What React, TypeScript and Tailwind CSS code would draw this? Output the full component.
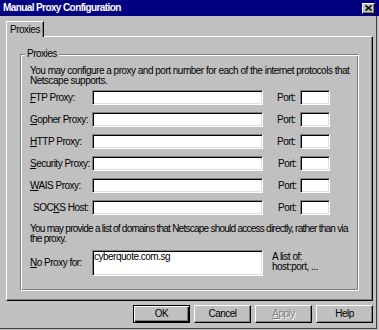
import React from "react";

const raised =
  "bg-[#c0c0c0] border border-t-white border-l-white border-r-black border-b-black shadow-[inset_-1px_-1px_0_#808080]";
const sunken =
  "bg-white border border-t-[#808080] border-l-[#808080] border-r-white border-b-white shadow-[inset_1px_1px_0_#000,inset_-1px_-1px_0_#dfdfdf]";

function Acc({ pre = "", k, rest }: { pre?: string; k: string; rest: string }) {
  return (
    <span>
      {pre}
      <span className="underline decoration-1 underline-offset-[1px]">{k}</span>
      {rest}
    </span>
  );
}

const rows = [
  { k: "F", rest: "TP Proxy:" },
  { k: "G", rest: "opher Proxy:" },
  { k: "H", rest: "TTP Proxy:" },
  { k: "S", rest: "ecurity Proxy:" },
  { k: "W", rest: "AIS Proxy:" },
  { pre: "SOC", k: "K", rest: "S Host:", indent: true },
];

export default function App() {
  return (
    <div className="w-[379px] h-[330px] bg-[#c0c0c0] overflow-hidden flex flex-col font-['Liberation_Sans',Arial,sans-serif] text-[10px] leading-[10px] tracking-[-0.5px] text-black">
      {/* Title bar */}
      <div className="h-[16px] bg-[#000080] flex items-center justify-between pl-[3px] pr-[4px] shrink-0">
        <span className="text-white font-bold tracking-[-0.6px] text-[10px]">Manual Proxy Configuration</span>
        <div className={`${raised} w-[13px] h-[11px] flex items-center justify-center`}>
          <svg width="7" height="6" viewBox="0 0 7 6">
            <path d="M0.5 0.5 L6.5 5.5 M6.5 0.5 L0.5 5.5" stroke="#000" strokeWidth="1.6" />
          </svg>
        </div>
      </div>

      {/* Body */}
      <div className="w-[377px] h-[313px] border-r border-b border-[#404040] pl-[6px] pt-[5px] flex flex-col">
        {/* Tab */}
        <div className="relative z-10 -mb-[1px] w-[38px] h-[16px] bg-[#c0c0c0] border-t border-l border-r border-t-white border-l-white border-r-black shadow-[inset_-1px_0_0_#808080] flex items-center justify-center">
          <span>Proxies</span>
        </div>

        {/* Tab panel */}
        <div className="w-[367px] h-[265px] border border-t-white border-l-white border-r-black border-b-black shadow-[inset_-1px_-1px_0_#808080] pt-[17px] pl-[13px]">
          {/* Group box */}
          <div className="relative w-[339px] h-[237px] border border-t-[#808080] border-l-[#808080] border-r-white border-b-white shadow-[inset_1px_1px_0_#fff,inset_-1px_-1px_0_#808080] pl-[9px] pt-[11px] flex flex-col">
            <span className="absolute left-[4px] -top-[6px] px-[2px] bg-[#c0c0c0]">Proxies</span>

            <p className="whitespace-nowrap">
              You may configure a proxy and port number for each of the internet protocols that
              <br />
              Netscape supports.
            </p>

            <div className="mt-[4px] flex flex-col gap-[7px]">
              {rows.map((r, i) => (
                <div key={i} className="flex items-center h-[15px]">
                  <div className={`w-[62px] whitespace-nowrap ${r.indent ? "pl-[3px]" : ""}`}>
                    <Acc pre={r.pre} k={r.k} rest={r.rest} />
                  </div>
                  <div className={`${sunken} w-[171px] h-[15px]`} />
                  <div className={`ml-[14px] w-[23px] ${i >= 3 ? "pl-[1px]" : ""}`}>Port:</div>
                  <div className={`${sunken} w-[30px] h-[15px]`} />
                </div>
              ))}
            </div>

            <p className="mt-[9px] whitespace-nowrap tracking-[-0.75px]">
              You may provide a list of domains that Netscape should access directly, rather than via
              <br />
              the proxy.
            </p>

            <div className="mt-[6px] flex items-start">
              <div className="w-[62px] h-[26px] flex items-center whitespace-nowrap">
                <Acc k="N" rest="o Proxy for:" />
              </div>
              <div className={`${sunken} w-[171px] h-[26px] pl-[1px] pt-[1px]`}>cyberquote.com.sg</div>
              <div className="ml-[9px] mt-[2px] whitespace-nowrap">
                A list of:
                <br />
                host:port, ...
              </div>
            </div>
          </div>
        </div>

        {/* Buttons */}
        <div className="w-[367px] mt-[4px] flex justify-end gap-[4px]">
          <button className="w-[57px] h-[18px] bg-[#c0c0c0] border border-black shadow-[inset_1px_1px_0_#fff,inset_-1px_-1px_0_#000,inset_-2px_-2px_0_#808080] flex items-center justify-center">
            OK
          </button>
          <button className={`${raised} w-[57px] h-[18px] flex items-center justify-center`}>Cancel</button>
          <button className={`${raised} w-[57px] h-[18px] flex items-center justify-center text-[#808080] [text-shadow:1px_1px_0_#fff]`}>
            <Acc k="A" rest="pply" />
          </button>
          <button className={`${raised} w-[57px] h-[18px] flex items-center justify-center`}>Help</button>
        </div>
      </div>
    </div>
  );
}
